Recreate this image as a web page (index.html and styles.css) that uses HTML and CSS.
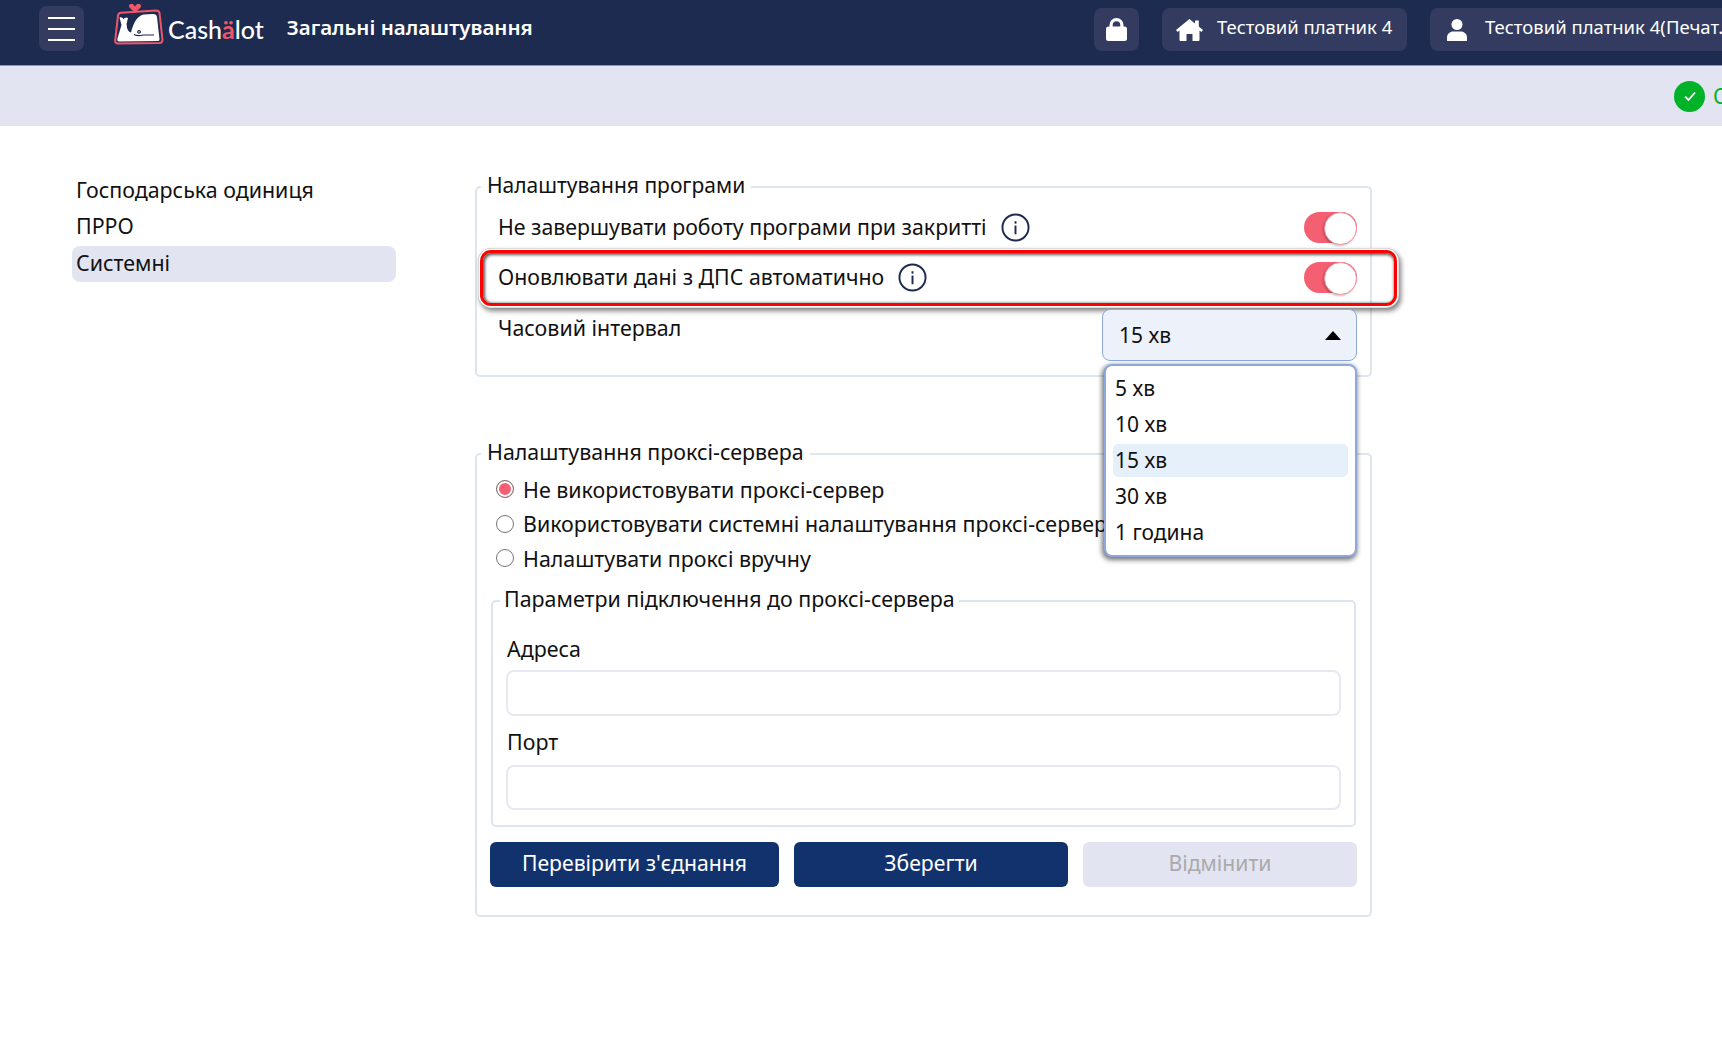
FILE: index.html
```html
<!DOCTYPE html>
<html lang="uk">
<head>
  <meta charset="UTF-8">
  <title>Загальні налаштування</title>
  <link rel="stylesheet" href="styles.css">
</head>
<body>
<header class="topbar">
  <button class="menu-btn"><span></span><span></span><span></span></button>
  <div class="logo">
    <svg class="logo-mark" width="50" height="42" viewBox="0 0 50 42">
      <path d="M21 9 L15.500 3.500a2.400 2.400 0 0 1 4-2.800 L21 2.500 L22.500 .7a2.400 2.400 0 0 1 4 2.800z" fill="#f0566a"/>
      <path d="M4 11.500 Q4.500 9 7 8.800 L42 6.500 Q45 6.500 45.500 9 L48.500 36 Q48.500 38.800 45.500 39 L4 39.500 Q1 39.500 1.200 36.500 Z" fill="none" stroke="#f0566a" stroke-width="2"/>
      <path d="M5.500 13.500 Q8 12.500 9.500 15 Q11.500 12.500 14 14 L12.500 20 Q13 28 17 28.500 Q21 12 30 10.500 L39 10 Q42.500 10 43 13 L45.500 35.500 Q45.500 37 44 37 L5 37.500 Q3 37.500 3.300 35 L7.500 21 Z" fill="#fff"/>
      <path d="M25 26.500a1.300 1.300 0 1 0 .1 0zM20 30.500 Q24 32.500 29 31 L40 31" fill="none" stroke="#1e2b50" stroke-width="1.200"/>
    </svg>
    <span class="logo-text">Cash<b>ä</b>lot</span>
  </div>
  <h1 class="page-title">Загальні налаштування</h1>
  <div class="top-actions">
    <button class="top-btn lock-btn">
      <svg width="21" height="23" viewBox="0 0 21 23"><path d="M3.500 10V7a7 7 0 0 1 14 0v3h-3.200V7a3.800 3.800 0 0 0-7.600 0v3z" fill="#fff"/><rect x="0" y="8.500" width="21" height="14.500" rx="2.500" fill="#fff"/></svg>
    </button>
    <button class="top-btn org-btn">
      <svg width="27" height="22" viewBox="0 0 27 22"><path d="M13.500 0 L19 4.400V1.500h3.800v6L27 11l-1.600 1.900-1.900-1.500V21a1 1 0 0 1-1 1H16.500v-7h-6v7H4.500a1 1 0 0 1-1-1V11.400L1.600 12.900 0 11z" fill="#fff"/></svg>
      <span>Тестовий платник 4</span>
    </button>
    <button class="top-btn user-btn">
      <svg width="20" height="22" viewBox="0 0 20 22"><circle cx="10" cy="5.500" r="5.500" fill="#fff"/><path d="M0 22v-3.500C0 15 3 12.500 6 12.500h8c3 0 6 2.500 6 6V22z" fill="#fff"/></svg>
      <span>Тестовий платник 4(Печат.</span>
    </button>
  </div>
</header>

<div class="statusbar">
  <span class="status-icon">
    <svg width="14" height="12" viewBox="0 0 14 12"><path d="M2 6.500 L5.500 10 L12 2.500" fill="none" stroke="#fff" stroke-width="1.800"/></svg>
  </span>
  <span class="status-text">Онлайн</span>
</div>

<main class="page">
  <nav class="side-nav">
    <a>Господарська одиниця</a>
    <a>ПРРО</a>
    <a class="active">Системні</a>
  </nav>

  <div class="content">
    <fieldset class="panel panel-app">
      <legend>Налаштування програми</legend>
      <div class="row">
        <span class="row-label"><span class="row-text">Не завершувати роботу програми при закритті</span>
          <svg class="info" width="29" height="29" viewBox="0 0 30 30"><circle cx="15" cy="15" r="13.500" fill="none" stroke="#1e2b50" stroke-width="2"/><rect x="14" y="13" width="2" height="9" fill="#1e2b50"/><rect x="14" y="8.500" width="2" height="2.500" fill="#1e2b50"/></svg>
        </span>
        <span class="toggle"></span>
      </div>
      <div class="row row-marked">
        <span class="row-label"><span class="row-text">Оновлювати дані з ДПС автоматично</span>
          <svg class="info" width="29" height="29" viewBox="0 0 30 30"><circle cx="15" cy="15" r="13.500" fill="none" stroke="#1e2b50" stroke-width="2"/><rect x="14" y="13" width="2" height="9" fill="#1e2b50"/><rect x="14" y="8.500" width="2" height="2.500" fill="#1e2b50"/></svg>
        </span>
        <span class="toggle"></span>
      </div>
      <div class="row row-interval">
        <span class="row-label">Часовий інтервал</span>
        <div class="select">
          <div class="select-value">15 хв <i class="arrow"></i></div>
          <ul class="select-list">
            <li>5 хв</li>
            <li>10 хв</li>
            <li class="current">15 хв</li>
            <li>30 хв</li>
            <li>1 година</li>
          </ul>
        </div>
      </div>
    </fieldset>

    <fieldset class="panel panel-proxy">
      <legend>Налаштування проксі-сервера</legend>
      <label class="radio"><i class="radio-mark checked"></i>Не використовувати проксі-сервер</label>
      <label class="radio"><i class="radio-mark"></i>Використовувати системні налаштування проксі-сервера</label>
      <label class="radio"><i class="radio-mark"></i>Налаштувати проксі вручну</label>

      <fieldset class="panel-inner">
        <legend>Параметри підключення до проксі-сервера</legend>
        <label class="field-label first">Адреса</label>
        <input class="field field-addr" type="text">
        <label class="field-label">Порт</label>
        <input class="field field-port" type="text">
      </fieldset>

      <div class="actions">
        <button class="btn btn-primary">Перевірити з'єднання</button>
        <button class="btn btn-primary">Зберегти</button>
        <button class="btn btn-disabled">Відмінити</button>
      </div>
    </fieldset>
  </div>
</main>
</body>
</html>
```

FILE: styles.css
```css
*{
  box-sizing: border-box;
  margin: 0;
  padding: 0;
  list-style: none;
}
html, body{
  height: 100%;
  overflow: hidden;
}
body{
  font-family: "Noto Sans", "Liberation Sans", sans-serif;
  font-size: 21.400px;
  color: #111;
  background: #fff;
}
button{
  font-family: inherit;
  border: 0;
}

/* top bar */
.topbar{
  height: 66px;
  padding-left: 39px;
  display: flex;
  align-items: flex-start;
  background: #1e2b50;
  border-bottom: 1px solid #8f97b5;
  overflow: hidden;
}
.menu-btn{
  width: 45px;
  height: 45px;
  margin-top: 6px;
  display: flex;
  flex-direction: column;
  justify-content: center;
  gap: 9px;
  padding: 0 9px;
  background: #333c60;
  border-radius: 8px;
}
.menu-btn span{
  display: block;
  height: 2px;
  background: #fff;
}
.logo{
  margin: 4px 0 0 30px;
  display: flex;
  align-items: center;
  height: 42px;
}
.logo-text{
  margin-left: 4px;
  margin-top: 7px;
  font-family: Lato, sans-serif;
  font-size: 25px;
  font-weight: 500;
  color: #fff;
}
.logo-text b{
  color: #f0566a;
  font-weight: 700;
}
.page-title{
  margin: 9px 0 0 23px;
  font-size: 20.500px;
  line-height: 36px;
  font-weight: 600;
  color: #fff;
  white-space: nowrap;
}
.top-actions{
  margin-left: auto;
  margin-right: -30px;
  margin-top: 8px;
  display: flex;
  gap: 23px;
  flex-shrink: 0;
}
.top-btn{
  height: 43px;
  padding-bottom: 6px;
  display: flex;
  align-items: center;
  color: #fff;
  font-size: 18.500px;
  background: #333c60;
  border-radius: 8px;
  white-space: nowrap;
  overflow: hidden;
}
.top-btn svg{
  margin-top: 6px;
}
.lock-btn{
  width: 45px;
  justify-content: center;
}
.org-btn{
  width: 245px;
  padding-left: 14px;
  gap: 14px;
}
.user-btn{
  width: 322px;
  padding-left: 17px;
  gap: 18px;
}

/* status strip */
.statusbar{
  height: 60px;
  padding-left: 1674px;
  display: flex;
  align-items: center;
  gap: 8px;
  background: #e2e4f1;
  white-space: nowrap;
}
.status-icon{
  width: 31px;
  height: 31px;
  flex-shrink: 0;
  display: flex;
  align-items: center;
  justify-content: center;
  border-radius: 50%;
  background: #00b227;
}
.status-text{
  color: #00b227;
  font-size: 21px;
}

/* page */
.page{
  padding: 47px 0 0 72px;
  display: flex;
  align-items: flex-start;
}
.side-nav{
  width: 324px;
  display: flex;
  flex-direction: column;
}
.side-nav a{
  height: 36px;
  line-height: 34px;
  padding-left: 4px;
  border-radius: 8px;
}
.side-nav a.active{
  margin-top: 1px;
  background: #e2e4f1;
}
.content{
  width: 897px;
  margin-left: 79px;
  margin-top: -1px;
}
.panel{
  min-width: 0;
  border: 2px solid #dde5ee;
  border-radius: 5px;
}
/* text sits a little above the line of the border */
.panel legend,
.panel-inner legend{
  line-height: 26px;
  padding: 0 6px 4px;
}
.panel-app{
  padding: 10px 13px 13px 21px;
}
.panel-app legend{
  margin-left: -17px;
  font-size: 21px;
}
.panel-proxy{
  margin-top: 62px;
  padding: 3px 14px 28px 14px;
}
.panel-proxy > legend{
  margin-left: -10px;
}

/* settings rows */
.row{
  display: flex;
  justify-content: space-between;
  align-items: center;
  height: 31px;
  margin-bottom: 19px;
  position: relative;
}
.row-label{
  display: flex;
  align-items: center;
  gap: 14px;
  white-space: nowrap;
}
.row-text{
  padding-bottom: 2px;
  font-size: 21.300px;
}
.info{
  flex-shrink: 0;
}
.toggle{
  width: 53px;
  height: 31px;
  position: relative;
  flex-shrink: 0;
  background: #f55f72;
  border-radius: 16px;
}
.toggle::after{
  content: "";
  position: absolute;
  right: 0;
  top: 0;
  width: 31px;
  height: 31px;
  background: #fff;
  border: 1px solid #f5909c;
  border-radius: 50%;
  box-shadow: -1px 1px 2px rgba(0,0,0,.25);
}
/* annotation frame drawn over the second row */
.row-marked::before{
  content: "";
  position: absolute;
  left: -18px;
  right: -40px;
  top: -12px;
  height: 50px;
  border: 3px solid #f00;
  border-radius: 11px;
  box-shadow: 0 0 0 1.500px #fff, 0 0 0 2px #bbb, 2px 3px 5px 2px rgba(0,0,0,.5), inset 1px 1px 3px 1px rgba(0,0,0,.65);
  pointer-events: none;
}
.row-interval{
  height: 53px;
  margin: -3px 0 0;
  align-items: flex-start;
  z-index: 2;
}
.row-interval .row-label{
  height: 36px;
}
.select{
  width: 255px;
  position: relative;
  font-size: 21px;
}
.select-value{
  height: 52px;
  padding: 0 15px 0 16px;
  display: flex;
  align-items: center;
  justify-content: space-between;
  background: #edf1fa;
  border: 1.500px solid #8ea8dc;
  border-radius: 8px;
}
.arrow{
  width: 0;
  height: 0;
  border-left: 8px solid transparent;
  border-right: 8px solid transparent;
  border-bottom: 9px solid #000;
}
/* open dropdown lies over the proxy panel */
.select-list{
  position: absolute;
  left: 2px;
  right: 0;
  top: 55px;
  height: 193px;
  padding: 6px 7px;
  background: #fff;
  border: 2px solid #8ea8dc;
  border-radius: 8px;
  box-shadow: -1px 2px 5px 1px rgba(0,0,0,.55);
}
.select-list li{
  height: 36px;
  line-height: 32px;
  padding-left: 2px;
  border-radius: 5px;
}
.select-list li.current{
  height: 33px;
  margin-bottom: 3px;
  background: #e5f0fb;
}

/* proxy */
.radio{
  height: 34.500px;
  padding-left: 5px;
  display: flex;
  align-items: center;
  gap: 9px;
  font-size: 21.400px;
  white-space: nowrap;
}
.radio-mark{
  width: 18px;
  height: 18px;
  flex-shrink: 0;
  background: #fff;
  border: 1.500px solid #767676;
  border-radius: 50%;
}
.radio-mark.checked{
  background: #f55f72;
  box-shadow: inset 0 0 0 2px #fff;
}
.panel-inner{
  margin-top: 10px;
  padding: 0 13px 14px;
  min-width: 0;
  border: 2px solid #dde5f1;
  border-radius: 5px;
}
.panel-inner legend{
  margin-left: -6px;
  padding: 0 4px 4px;
}
.field-label{
  display: block;
  line-height: 30px;
  margin-top: 11px;
  margin-bottom: 8px;
  padding-left: 1px;
}
.field-label.first{
  margin-top: 18px;
  margin-bottom: 6px;
}
.field{
  display: block;
  width: 100%;
  background: #fff;
  border: 2px solid #e6e9f3;
  border-radius: 8px;
}
.field-addr{
  height: 46px;
}
.field-port{
  height: 45px;
  margin-bottom: 1px;
}
.actions{
  margin: 15px 0 0 -1px;
  display: grid;
  grid-template-columns: 289px 274px 274px;
  gap: 15px;
}
.btn{
  height: 45px;
  padding-bottom: 3px;
  font-size: 21.200px;
  border-radius: 6px;
}
.btn-primary{
  background: #12326e;
  color: #fff;
}
.btn-disabled{
  background: #e2e4f1;
  color: #aaa;
}
```
